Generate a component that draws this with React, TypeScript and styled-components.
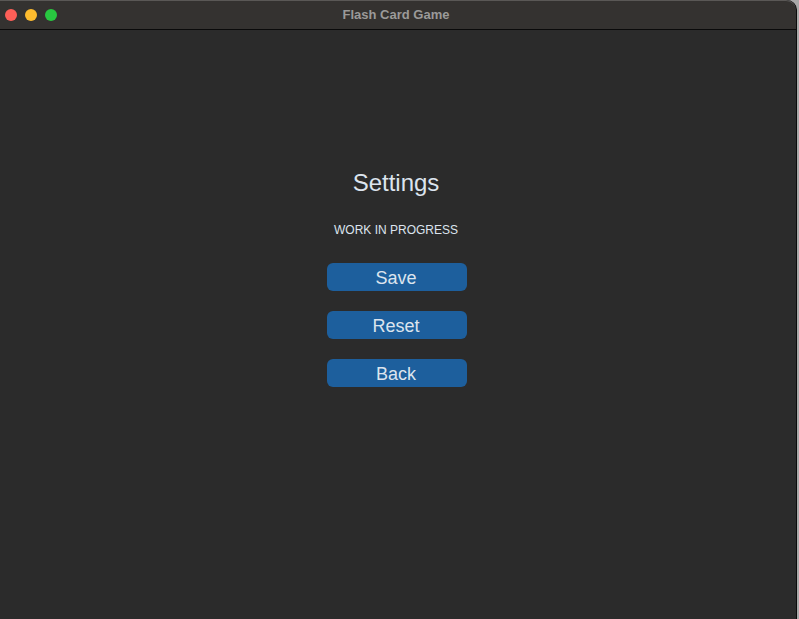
import React from "react";
import styled, { createGlobalStyle } from "styled-components";

const Global = createGlobalStyle`
  html, body { margin: 0; padding: 0; background: #a9a9a9; height: 100%; overflow: hidden; }
  #root { height: 100%; }
`;

const Screen = styled.div`
  display: flex;
  height: 619px;
  width: 799px;
  background: #a9a9a9;
`;

const Window = styled.div`
  width: 797px;
  height: 619px;
  display: flex;
  flex-direction: column;
  background: #2b2b2b;
  border-right: 1px solid #0c0c0c;
  border-top-right-radius: 10px;
  overflow: hidden;
  box-sizing: border-box;
`;

const TitleBar = styled.div`
  position: relative;
  height: 28px;
  flex: 0 0 28px;
  background: #343230;
  border-top: 1px solid #5a5856;
  border-bottom: 1px solid #0a0a0a;
  display: flex;
  align-items: center;
  justify-content: center;
  box-sizing: content-box;
  border-top-right-radius: 10px;
`;

const Lights = styled.div`
  position: absolute;
  left: 5px;
  top: 8px;
  display: flex;
  gap: 8px;
`;

const Light = styled.span<{ $c: string }>`
  width: 12px;
  height: 12px;
  border-radius: 50%;
  background: ${(p) => p.$c};
`;

const Title = styled.div`
  font-family: "Liberation Sans", Arial, sans-serif;
  font-weight: bold;
  font-size: 13px;
  color: #9b9a99;
  margin-left: -4px;
  margin-top: -2px;
`;

const Content = styled.div`
  flex: 1;
  display: flex;
  flex-direction: column;
  align-items: center;
  padding-top: 139px;
  padding-right: 2px;
`;

const Heading = styled.div`
  font-family: "Liberation Sans", Arial, sans-serif;
  font-size: 24px;
  color: #dce4ee;
  line-height: 28px;
  margin-right: 2px;
`;

const Note = styled.div`
  font-family: "Liberation Sans", Arial, sans-serif;
  font-size: 12px;
  color: #dce4ee;
  margin-top: 26px;
  margin-right: 2px;
  line-height: 14px;
`;

const Buttons = styled.div`
  display: flex;
  flex-direction: column;
  gap: 20px;
  margin-top: 26px;
`;

const Button = styled.button`
  width: 140px;
  height: 28px;
  border: none;
  border-radius: 6px;
  background: #1d5f9d;
  color: #dce4ee;
  font-family: "Liberation Sans", Arial, sans-serif;
  font-size: 18px;
  padding: 2px 2px 0 0;
  cursor: pointer;
`;

export default function App() {
  return (
    <>
      <Global />
      <Screen>
        <Window>
          <TitleBar>
            <Lights>
              <Light $c="#fe5f57" />
              <Light $c="#febc2e" />
              <Light $c="#28c840" />
            </Lights>
            <Title>Flash Card Game</Title>
          </TitleBar>
          <Content>
            <Heading>Settings</Heading>
            <Note>WORK IN PROGRESS</Note>
            <Buttons>
              <Button>Save</Button>
              <Button>Reset</Button>
              <Button>Back</Button>
            </Buttons>
          </Content>
        </Window>
      </Screen>
    </>
  );
}
